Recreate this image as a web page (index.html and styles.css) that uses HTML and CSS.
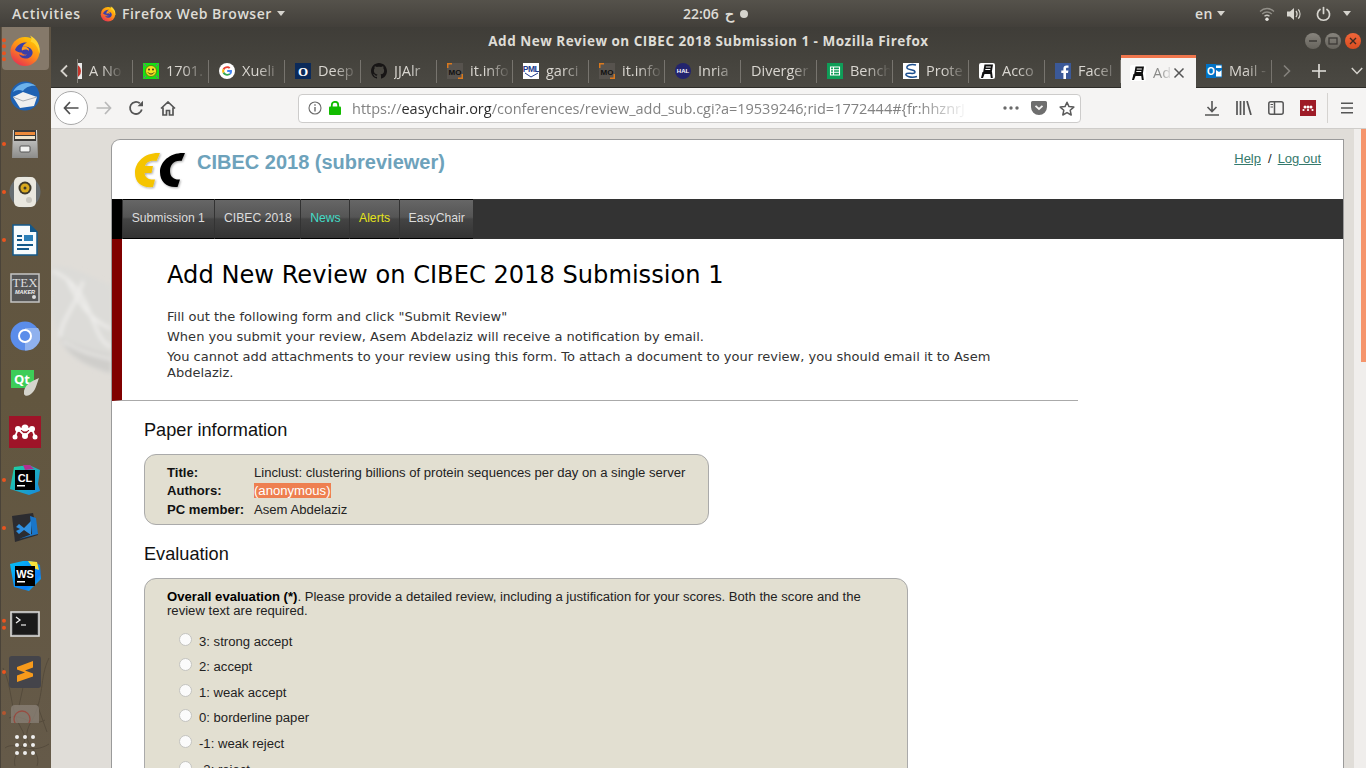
FILE: index.html
```html
<!DOCTYPE html>
<html lang="en">
<head>
<meta charset="utf-8">
<title>Add New Review on CIBEC 2018 Submission 1 - Mozilla Firefox</title>
<link rel="stylesheet" href="styles.css">
</head>
<body>
<svg class="defs" width="0" height="0">
  <defs>
    <linearGradient id="ffg" x1="0.8" y1="0" x2="0.2" y2="1"><stop offset="0" stop-color="#ffd000"/><stop offset="0.5" stop-color="#ff8a1a"/><stop offset="1" stop-color="#e62a55"/></linearGradient>
    <linearGradient id="gray" x1="0" y1="0" x2="0" y2="1"><stop offset="0" stop-color="#d8d8d6"/><stop offset="1" stop-color="#8c8c8a"/></linearGradient>
    <linearGradient id="clg" x1="0" y1="0" x2="1" y2="1"><stop offset="0" stop-color="#1fd6a0"/><stop offset="1" stop-color="#1787e0"/></linearGradient>
    <linearGradient id="wsg" x1="0" y1="0" x2="1" y2="1"><stop offset="0" stop-color="#07c3f2"/><stop offset="0.7" stop-color="#087cfa"/><stop offset="1" stop-color="#20d0d0"/></linearGradient>
    <symbol id="firefox" viewBox="0 0 32 32">
      <circle cx="16" cy="17.5" r="14.5" fill="url(#ffg)"/>
      <path d="M21 1.5C28 5 32 12 30.5 20 29 13 26 9 21.500 7.500 23 5.500 22.500 3.500 21 1.500Z" fill="#ffd22e"/>
      <path d="M6 16C8 10.500 13 8 18 8.500 15.500 9.800 14 11 13.500 13 17 12 22.500 13 23.500 17.500 24.300 21.500 20.500 25 16 24.500 12.500 24.200 10.500 22 10 20 12 22 16 22.300 18 20.500 15.500 21 13 20 12.500 18.500 10.500 18.500 8 18 6 16Z" fill="#3b3fa8"/>
      <path d="M13.500 13C17 12 20.500 14 20 17 18.500 15 15.500 15 13 16.500 12.500 15.500 12.800 14 13.500 13Z" fill="#ff9a1f"/>
    </symbol>
    <symbol id="chair" viewBox="0 0 16 16">
      <rect width="16" height="16" rx="2" fill="#fff"/>
      <path d="M5.500 1.500H14L12.800 9H13L13.800 15H11.800L11.300 11H5.500L4 15H2L3.500 9H4.200Z" fill="#111"/>
      <rect x="6.800" y="3.500" width="5" height="1" fill="#fff"/><rect x="6.300" y="6" width="5" height="1" fill="#fff"/>
    </symbol>
    <symbol id="mo" viewBox="0 0 16 16">
      <rect width="16" height="16" fill="#57534e"/>
      <path d="M0 0H5V1.500H1.500V5H0ZM11 16H16V11H14.500V14.500H11Z" fill="#d9791e"/>
      <text x="8" y="12" class="mo-text">MO</text>
    </symbol>
  </defs>
</svg>

<header class="topbar">
  <div class="topbar-left">
    <span class="activities">Activities</span>
    <svg class="app-icon" width="16" height="17"><use href="#firefox"/></svg>
    <span class="app-name">Firefox Web Browser</span>
    <span class="caret"></span>
  </div>
  <div class="clock"><span>22:06 ح</span><span class="clock-dot"></span></div>
  <div class="topbar-right">
    <span class="lang">en</span><span class="caret"></span>
    <svg class="tray-wifi" width="16" height="16" viewBox="0 0 16 16"><g fill="none" stroke="#c8c6c0" stroke-width="1.300"><path d="M1 5.500C5 1.500 11 1.500 15 5.500" opacity=".55"/><path d="M3.200 8C6 5.300 10 5.300 12.800 8" opacity=".55"/><path d="M5.500 10.300C7 9 9 9 10.500 10.300"/></g><circle cx="8" cy="13.300" r="1.700" fill="#e6e4df"/></svg>
    <svg class="tray-vol" width="17" height="16" viewBox="0 0 17 16"><path d="M1 5.500H4L8 2V14L4 10.500H1Z" fill="#d8d6d0"/><g fill="none" stroke="#d8d6d0" stroke-width="1.300"><path d="M10 5C11.300 6.800 11.300 9.200 10 11"/><path d="M12.300 3.300C14.500 6 14.500 10 12.300 12.700"/></g></svg>
    <svg class="tray-pow" width="15" height="16" viewBox="0 0 15 16"><g fill="none" stroke="#d8d6d0" stroke-width="1.700" stroke-linecap="round"><path d="M7.500 1.500V7.500"/><path d="M4 3.500C1 5.500 .8 9.500 2.600 12 5 15 10 15 12.400 12 14.200 9.500 14 5.500 11 3.500"/></g></svg>
    <span class="caret caret-last"></span>
  </div>
</header>

<div class="desktop">
  <nav class="dock">
    <svg class="dock-texture" width="51" height="120" viewBox="0 0 51 120"><g fill="none" stroke="#3e362b" stroke-width="1" opacity=".4"><path d="M2 20C12 40 8 60 20 80S10 100 14 118"/><path d="M48 10C38 30 44 50 30 74S42 100 36 118"/><path d="M8 70C20 64 30 80 44 72"/><path d="M4 100C14 92 30 108 48 96"/><path d="M24 30L18 58M36 56L46 84"/></g></svg>
    <div class="dock-item dock-first">
      <span class="run-dots"><i></i><i></i><i></i><i></i></span>
      <svg width="32" height="32"><use href="#firefox"/></svg>
    </div>
    <div class="dock-item">
      <svg width="32" height="32" viewBox="0 0 32 32"><circle cx="16" cy="16" r="14.500" fill="#1f62b3"/><path d="M4 12C8 4 18 0 27 6 21 5 16 8 14 11 10 9 7 10 4 12Z" fill="#6cb2ec"/><path d="M4 17L14 12 28 17 25 26 11 28Z" fill="#f0f0f0"/><path d="M4 17L14 21 28 17" fill="none" stroke="#a9aeb4" stroke-width="1"/></svg>
    </div>
    <div class="dock-item">
      <span class="run-dots"><i></i></span>
      <svg width="28" height="32" viewBox="0 0 28 32"><path d="M2 2H26L27 30H1Z" fill="url(#gray)"/><rect x="3" y="2" width="22" height="11" fill="#3c3a38"/><rect x="4" y="4" width="20" height="3" fill="#ee8a3a"/><rect x="4" y="8" width="20" height="3" fill="#f0e4cc"/><rect x="9" y="18" width="10" height="6" rx="1" fill="#f2f2f0" stroke="#555"/></svg>
    </div>
    <div class="dock-item">
      <span class="run-dots"><i></i></span>
      <svg width="32" height="32" viewBox="0 0 32 32"><circle cx="16" cy="16" r="15.500" fill="#6f8cad" opacity=".45"/><rect x="5" y="1" width="22" height="30" rx="5" fill="#e9e7df"/><circle cx="16" cy="12" r="6.500" fill="#3f3a2c"/><circle cx="16" cy="12" r="4.500" fill="#d9a91f"/><circle cx="16" cy="12" r="1.500" fill="#3f3a2c"/><circle cx="20" cy="24" r="3" fill="#c9c7c0"/></svg>
    </div>
    <div class="dock-item">
      <span class="run-dots"><i></i></span>
      <svg width="26" height="32" viewBox="0 0 26 32"><path d="M1 1H18L25 8V31H1Z" fill="#f7fbfd" stroke="#14598a" stroke-width="1.500"/><path d="M18 1L25 8H18Z" fill="#14598a"/><rect x="5" y="11" width="5" height="2" fill="#14598a"/><rect x="5" y="15" width="5" height="2" fill="#14598a"/><rect x="12" y="11" width="9" height="6" fill="#2a7fb8"/><rect x="5" y="20" width="16" height="2" fill="#14598a"/><rect x="5" y="24" width="12" height="2" fill="#14598a"/></svg>
    </div>
    <div class="dock-item">
      <svg width="30" height="30" viewBox="0 0 30 30"><rect x="1" y="1" width="28" height="28" fill="#555" stroke="#c5c5c3" stroke-width="1.500"/><text x="15" y="14" class="tex-t">TEX</text><text x="15" y="20.500" class="tex-m">MAKER</text><circle cx="24" cy="24" r="2" fill="#ddd"/></svg>
    </div>
    <div class="dock-item">
      <svg width="30" height="30" viewBox="0 0 30 30"><circle cx="15" cy="15" r="14.500" fill="#5b8dea"/><path d="M15 7H28A14.500 14.500 0 0 1 15 29.500Z" fill="#8fb1ee"/><circle cx="15" cy="15" r="7" fill="#fff"/><circle cx="15" cy="15" r="5" fill="#5b8dea"/></svg>
    </div>
    <div class="dock-item">
      <svg width="30" height="30" viewBox="0 0 30 30"><rect x="1" y="1" width="23" height="18" fill="#3dcd58" /><text x="12" y="15" class="qt-t">Qt</text><path d="M29 9C22 12 13 16 14 25 15 28 20 27 23 23 26 20 27 14 29 9Z" fill="#d5d4cc"/></svg>
    </div>
    <div class="dock-item">
      <svg width="32" height="32" viewBox="0 0 32 32"><rect width="32" height="32" fill="#9e1428"/><g fill="#fff"><circle cx="16" cy="12" r="3.500"/><circle cx="9" cy="13" r="3"/><circle cx="23" cy="13" r="3"/><circle cx="6" cy="21" r="2.500"/><circle cx="26" cy="21" r="2.500"/><circle cx="16" cy="20" r="3"/></g><path d="M6 21L9 13 16 20 23 13 26 21M9 13H23" stroke="#fff" stroke-width="1.800" fill="none"/></svg>
    </div>
    <div class="dock-item">
      <span class="run-dots"><i></i></span>
      <svg width="32" height="32" viewBox="0 0 32 32"><path d="M5 3L20 1 31 6 29 20 31 27 20 31 1 25 3 14Z" fill="url(#clg)"/><path d="M14 1L21 1 25 5 16 6Z" fill="#b3308f"/><rect x="6" y="6" width="20" height="20" fill="#000"/><text x="16" y="17.500" class="jb-t">CL</text><rect x="8" y="21" width="8" height="1.500" fill="#fff"/></svg>
    </div>
    <div class="dock-item">
      <span class="run-dots"><i></i></span>
      <svg width="28" height="30" viewBox="0 0 28 30"><path d="M1 3L22 0 27 22 4 29Z" fill="#2c2c30"/><path d="M19 3L25 5 27 21 8 26 21 21Z" fill="#1a76c9"/><path d="M5 14L8 11 13 15 20 8V22L13 17 8 21 5 18 9 16Z" fill="#2f8fe0"/></svg>
    </div>
    <div class="dock-item">
      <svg width="32" height="32" viewBox="0 0 32 32"><path d="M1 4L14 1 22 1 31 5 32 19 20 31 5 27Z" fill="url(#wsg)"/><path d="M19 1L28 2 30 10 24 8Z" fill="#f7e33b"/><rect x="6" y="6" width="20" height="20" fill="#000"/><text x="16" y="17.500" class="jb-t">WS</text><rect x="8" y="21" width="8" height="1.500" fill="#fff"/></svg>
    </div>
    <div class="dock-item">
      <span class="run-dots"><i></i><i></i></span>
      <svg width="30" height="26" viewBox="0 0 30 26"><rect x="1" y="1" width="28" height="24" fill="#3e3e3e" stroke="#d9d9d7" stroke-width="1.600"/><rect x="3" y="3" width="24" height="20" fill="#1a1a1a"/><path d="M6 6L10 9 6 12" fill="none" stroke="#eee" stroke-width="1.300"/><path d="M11 14H16" stroke="#eee" stroke-width="1.200"/></svg>
    </div>
    <div class="dock-item">
      <span class="run-dots"><i></i></span>
      <svg width="32" height="32" viewBox="0 0 32 32"><rect width="32" height="32" rx="3" fill="#44444a"/><path d="M8 11L24 5V11.500L16 14.500 24 17.500V20.500L8 26V19.500L16 16.500 8 13.500Z" fill="#f79a1b"/></svg>
    </div>
    <div class="dock-item dock-partial">
      <span class="run-dots"><i></i></span>
      <svg width="28" height="18" viewBox="0 0 28 18"><rect y="0" width="28" height="24" rx="4" fill="#8b8278"/><circle cx="11" cy="14" r="8" fill="none" stroke="#a8483f" stroke-width="1.300"/></svg>
    </div>
    <div class="dock-grid"><i></i><i></i><i></i><i></i><i></i><i></i><i></i><i></i><i></i></div>
  </nav>

  <div class="window">
    <div class="titlebar">
      <span></span>
      <span class="title-text">Add New Review on CIBEC 2018 Submission 1 - Mozilla Firefox</span>
      <div class="win-buttons">
        <span class="win-btn"><svg width="10" height="10" viewBox="0 0 10 10"><path d="M1 5H9" stroke="#3c3a36" stroke-width="1.500"/></svg></span>
        <span class="win-btn"><svg width="10" height="10" viewBox="0 0 10 10"><rect x="1" y="2" width="8" height="6" fill="none" stroke="#3c3a36" stroke-width="1.300"/></svg></span>
        <span class="win-btn win-close"><svg width="10" height="10" viewBox="0 0 10 10"><path d="M2 2L8 8M8 2L2 8" stroke="#3c2a22" stroke-width="1.400"/></svg></span>
      </div>
    </div>

    <div class="tabstrip">
      <span class="tab-scroll"><svg width="10" height="14" viewBox="0 0 10 14"><path d="M8 1.500L2.500 7 8 12.500" fill="none" stroke="#d5d2cc" stroke-width="1.800"/></svg></span>
      <div class="tab tab-first"><svg class="fav-clip" width="16" height="16" viewBox="0 0 16 16"><rect width="16" height="16" fill="#e8e8e8"/><circle cx="8" cy="8" r="7" fill="#c7342a"/></svg><span class="tab-label">A No</span></div>
      <div class="tab"><svg width="16" height="16" viewBox="0 0 16 16"><rect width="16" height="16" fill="#16e016"/><circle cx="8" cy="8" r="5.500" fill="#f3e21f" stroke="#5c5a10" stroke-width=".7"/><circle cx="6" cy="6.500" r=".9" fill="#222"/><circle cx="10" cy="6.500" r=".9" fill="#222"/><path d="M5 9.500C6.500 11.500 9.500 11.500 11 9.500" stroke="#222" fill="none"/><path d="M1 1L3 3M15 1L13 3M1 15L3 13M15 15L13 13" stroke="#777" stroke-width="1.300"/></svg><span class="tab-label">1701.</span></div>
      <div class="tab"><svg width="16" height="16" viewBox="0 0 16 16"><circle cx="8" cy="8" r="8" fill="#fff"/><path d="M8.200 3.300C9.500 3.300 10.600 3.800 11.400 4.500L10 5.800C9.500 5.400 8.900 5.100 8.200 5.100 6.900 5.100 5.800 5.900 5.400 7L3.700 5.700C4.600 4.200 6.300 3.300 8.200 3.300Z" fill="#ea4335"/><path d="M3.700 5.700L5.400 7C5.200 7.600 5.200 8.400 5.400 9L3.700 10.300C3 9 3 7 3.700 5.700Z" fill="#fbbc05"/><path d="M3.700 10.300L5.400 9C5.800 10.100 6.900 10.900 8.200 10.900 9 10.900 9.600 10.700 10.100 10.400L11.700 11.600C10.800 12.300 9.600 12.700 8.200 12.700 6.300 12.700 4.600 11.800 3.700 10.300Z" fill="#34a853"/><path d="M12.900 7H8.200V8.900H10.900C10.700 9.500 10.500 10 10.100 10.400L11.700 11.600C12.700 10.700 13.200 9 12.900 7Z" fill="#4285f4"/></svg><span class="tab-label">Xueli</span></div>
      <div class="tab"><svg width="16" height="16" viewBox="0 0 16 16"><rect width="16" height="16" fill="#0b2a5a"/><text x="8" y="12.500" class="fav-o">O</text></svg><span class="tab-label">Deep</span></div>
      <div class="tab"><svg width="16" height="16" viewBox="0 0 16 16"><path d="M8 0C3.600 0 0 3.600 0 8 0 11.500 2.300 14.500 5.500 15.600 5.900 15.700 6 15.400 6 15.200V13.800C3.800 14.300 3.300 12.700 3.300 12.700 2.900 11.800 2.400 11.500 2.400 11.500 1.700 11 2.500 11 2.500 11 3.300 11.100 3.700 11.800 3.700 11.800 4.400 13.100 5.600 12.700 6 12.500 6.100 12 6.300 11.600 6.500 11.400 4.700 11.200 2.900 10.500 2.900 7.500 2.900 6.600 3.200 5.900 3.700 5.300 3.600 5.100 3.300 4.300 3.800 3.200 3.800 3.200 4.500 3 6 4 7.300 3.600 8.700 3.600 10 4 11.500 3 12.200 3.200 12.200 3.200 12.700 4.300 12.400 5.100 12.300 5.300 12.800 5.900 13.100 6.600 13.100 7.500 13.100 10.600 11.300 11.200 9.500 11.400 9.800 11.700 10 12.100 10 12.900V15.200C10 15.400 10.100 15.700 10.600 15.600 13.700 14.500 16 11.500 16 8 16 3.600 12.400 0 8 0Z" fill="#171515"/></svg><span class="tab-label">JJAlr</span></div>
      <div class="tab"><svg width="16" height="16"><use href="#mo"/></svg><span class="tab-label">it.info</span></div>
      <div class="tab"><svg width="16" height="16" viewBox="0 0 16 16"><rect width="16" height="16" fill="#fff"/><text x="8" y="8.500" class="fav-pml">PML</text><path d="M2 10L8 14 15 10" stroke="#203a8c" fill="none"/></svg><span class="tab-label">garci</span></div>
      <div class="tab"><svg width="16" height="16"><use href="#mo"/></svg><span class="tab-label">it.info</span></div>
      <div class="tab"><svg width="16" height="16" viewBox="0 0 16 16"><circle cx="8" cy="8" r="8" fill="#23246e"/><text x="8" y="10" class="fav-hal">HAL</text></svg><span class="tab-label">Inria</span></div>
      <div class="tab"><span class="tab-label tab-label-wide">Diverger</span></div>
      <div class="tab"><svg width="16" height="16" viewBox="0 0 16 16"><rect width="16" height="16" fill="#0f9d58"/><path d="M3.500 4H12.500V12H3.500ZM3.500 6.700H12.500M3.500 9.300H12.500M6.500 4V12" fill="none" stroke="#fff" stroke-width="1.100"/></svg><span class="tab-label">Bench</span></div>
      <div class="tab"><svg width="16" height="16" viewBox="0 0 16 16"><rect width="16" height="16" fill="#fff"/><path d="M13 2C8 .5 3 2.500 4 5S12 6 12 9 4 9 3 11 8 15.500 14 13.500" fill="none" stroke="#1c4f8f" stroke-width="1.500"/></svg><span class="tab-label">Prote</span></div>
      <div class="tab"><svg width="16" height="16"><use href="#chair"/></svg><span class="tab-label">Acco</span></div>
      <div class="tab"><svg width="16" height="16" viewBox="0 0 16 16"><rect width="16" height="16" fill="#3b5998"/><path d="M11 16V10H13L13.400 7.500H11V6C11 5.200 11.300 4.800 12.200 4.800H13.500V2.500C13 2.400 12.300 2.400 11.500 2.400 9.600 2.400 8.400 3.500 8.400 5.600V7.500H6.300V10H8.400V16Z" fill="#fff"/></svg><span class="tab-label">Facel</span></div>
      <div class="tab tab-active"><svg width="16" height="16"><use href="#chair"/></svg><span class="tab-label tab-label-short">Ad</span><svg class="tab-close" width="12" height="12" viewBox="0 0 12 12"><path d="M1.500 1.500L10.500 10.500M10.500 1.500L1.500 10.500" stroke="#555" stroke-width="1.500"/></svg></div>
      <div class="tab"><svg width="16" height="16" viewBox="0 0 16 16"><rect x="6" y="2" width="10" height="12" fill="#fff" stroke="#0072c6"/><rect y="1" width="10" height="14" fill="#0072c6"/><text x="5" y="11.500" class="fav-ol">O</text><path d="M10 5H16V7L13 9 10 7Z" fill="#0072c6"/></svg><span class="tab-label">Mail -</span></div>
      <div class="tab-tools">
        <svg width="10" height="14" viewBox="0 0 10 14"><path d="M2 1.500L7.500 7 2 12.500" fill="none" stroke="#85827c" stroke-width="1.600"/></svg>
        <svg width="14" height="14" viewBox="0 0 14 14"><path d="M7 0V14M0 7H14" stroke="#e4e2dd" stroke-width="1.600"/></svg>
        <svg width="12" height="8" viewBox="0 0 12 8"><path d="M.8 1L6 6.500 11.200 1" fill="none" stroke="#d5d2cc" stroke-width="1.500"/></svg>
      </div>
    </div>

    <div class="toolbar">
      <span class="back-btn"><svg width="16" height="14" viewBox="0 0 16 14"><path d="M7 1L1.500 7 7 13M1.500 7H15.500" fill="none" stroke="#4f4f4f" stroke-width="1.700"/></svg></span>
      <svg class="tb-forward" width="16" height="14" viewBox="0 0 16 14"><path d="M9 1L14.500 7 9 13M14.500 7H.5" fill="none" stroke="#b9b9b9" stroke-width="1.700"/></svg>
      <svg class="tb-reload" width="16" height="16" viewBox="0 0 16 16"><path d="M13.800 9.500A6 6 0 1 1 11.800 3.300" fill="none" stroke="#555" stroke-width="1.800"/><path d="M9.500 6.200H15V.8Z" fill="#555"/></svg>
      <svg class="tb-home" width="16" height="15" viewBox="0 0 16 15"><path d="M1 7.500L8 1 15 7.500M3 6.500V14H6.500V9.500H9.500V14H13V6.500" fill="none" stroke="#555" stroke-width="1.700"/></svg>
      <div class="urlbar">
        <svg class="url-info" width="14" height="14" viewBox="0 0 14 14"><circle cx="7" cy="7" r="6" fill="none" stroke="#6a6a6a" stroke-width="1.100"/><path d="M7 6V10.500M7 3.300V4.800" stroke="#6a6a6a" stroke-width="1.400"/></svg>
        <svg class="url-lock" width="12" height="14" viewBox="0 0 12 14"><rect y="5.500" width="12" height="8.500" rx="1" fill="#12bc00"/><path d="M2.800 6V4A3.200 3.200 0 0 1 9.200 4V6" fill="none" stroke="#12bc00" stroke-width="1.800"/></svg>
        <span class="url-text">https://<b>easychair.org</b>/conferences/review_add_sub.cgi?a=19539246;rid=1772444#{fr:hhznrJ</span>
        <svg class="url-dots" width="16" height="4" viewBox="0 0 16 4"><circle cx="2" cy="2" r="1.700" fill="#6a6a6a"/><circle cx="8" cy="2" r="1.700" fill="#6a6a6a"/><circle cx="14" cy="2" r="1.700" fill="#6a6a6a"/></svg>
        <svg class="url-pocket" width="16" height="14" viewBox="0 0 16 14"><path d="M1.500 0H14.500A1.500 1.500 0 0 1 16 1.500V6A8 8 0 0 1 0 6V1.500A1.500 1.500 0 0 1 1.500 0Z" fill="#6e6e6e"/><path d="M4.500 4.800L8 8 11.500 4.800" fill="none" stroke="#f5f4f3" stroke-width="1.800"/></svg>
        <svg class="url-star" width="16" height="15" viewBox="0 0 16 15"><path d="M8 1.200L10 5.600 14.800 6.100 11.200 9.300 12.200 14 8 11.600 3.800 14 4.800 9.300 1.200 6.100 6 5.600Z" fill="none" stroke="#5a5a5a" stroke-width="1.500" stroke-linejoin="round"/></svg>
      </div>
      <svg class="tb-download" width="14" height="15" viewBox="0 0 14 15"><path d="M7 0V10M2.500 6L7 10.500 11.500 6M0 14H14" fill="none" stroke="#555" stroke-width="1.600"/></svg>
      <svg class="tb-library" width="16" height="14" viewBox="0 0 16 14"><path d="M1 0V14M4.500 0V14M8 0V14M11 0L15 14" fill="none" stroke="#555" stroke-width="1.700"/></svg>
      <svg class="tb-sidebar" width="16" height="14" viewBox="0 0 16 14"><rect x=".8" y=".8" width="14.400" height="12.400" rx="2" fill="none" stroke="#555" stroke-width="1.500"/><path d="M6.500 1V13" stroke="#555" stroke-width="1.500"/><path d="M2.500 3.500H5M2.500 6H5" stroke="#555"/></svg>
      <svg class="tb-mendeley" width="16" height="16" viewBox="0 0 16 16"><rect width="16" height="16" fill="#9e1b27"/><g fill="#fff"><circle cx="5" cy="7" r="1.500"/><circle cx="11" cy="7" r="1.500"/><circle cx="8" cy="7" r="1.500"/><circle cx="3.500" cy="10" r="1.100"/><circle cx="12.500" cy="10" r="1.100"/><circle cx="8" cy="10" r="1.100"/></g></svg>
      <span class="tb-sep"></span>
      <svg class="tb-menu" width="12" height="12" viewBox="0 0 12 12"><path d="M0 1.200H12M0 6H12M0 10.800H12" stroke="#555" stroke-width="1.500"/></svg>
    </div>

    <div class="viewport">
      <svg class="swirl" width="60" height="270" viewBox="0 0 60 270"><defs><filter id="soft" x="-20%" y="-20%" width="140%" height="140%"><feGaussianBlur stdDeviation="2"/></filter></defs><g filter="url(#soft)"><path d="M0 138C20 134 42 150 60 156V246C40 238 16 230 9 212 4 198 0 182 0 160Z" fill="#dcdbd8"/><path d="M9 208C22 216 42 222 60 226V244C40 238 18 230 9 208Z" fill="#cfcecb"/><g fill="none" stroke="#eeedeb" stroke-width="3"><path d="M2 142C20 150 30 162 38 182S50 214 60 218"/><path d="M32 152C26 176 10 190 9 208"/><path d="M16 150C26 172 38 190 60 200"/></g><path d="M12 212C26 222 44 226 60 230" fill="none" stroke="#f0efed" stroke-width="2"/></g></svg>
      <main class="page">
        <section class="page-head">
          <div class="conf">
            <svg class="logo" width="54" height="38" viewBox="0 0 54 38"><defs><filter id="sh" x="-20%" y="-20%" width="140%" height="140%"><feDropShadow dx="1" dy="1" stdDeviation="1" flood-color="#000" flood-opacity=".35"/></filter></defs><path d="M26 1L22.500 9C15 8 12 11 11 14H19L17.500 21H10.500C11 26 15 28 21 27.500L19 35C8 36 1 31 1 21 1 9 12 0 26 1Z" fill="#f5c400" filter="url(#sh)"/><path d="M51 1L47.500 9C40 8 36 13 36 19 36 25 40 28 46 27.500L43.500 35C33 36 26 30 26 20 26 9 37 0 51 1Z" fill="#000" filter="url(#sh)"/></svg>
            <h1 class="conf-title">CIBEC 2018 (subreviewer)</h1>
            <div class="conf-links"><a href="#">Help</a><span class="slash">/</span><a href="#">Log out</a></div>
          </div>
          <ul class="menu">
            <li>Submission 1</li>
            <li>CIBEC 2018</li>
            <li class="menu-news">News</li>
            <li class="menu-alerts">Alerts</li>
            <li>EasyChair</li>
          </ul>
        </section>
        <section class="intro">
          <h2 class="intro-title">Add New Review on CIBEC 2018 Submission 1</h2>
          <p>Fill out the following form and click "Submit Review"</p>
          <p>When you submit your review, Asem Abdelaziz will receive a notification by email.</p>
          <p>You cannot add attachments to your review using this form. To attach a document to your review, you should email it to Asem Abdelaziz.</p>
        </section>
        <section class="body">
          <h3 class="sec-title">Paper information</h3>
          <div class="box box-info">
            <table class="info">
              <tr><th>Title:</th><td>Linclust: clustering billions of protein sequences per day on a single server</td></tr>
              <tr><th>Authors:</th><td><span class="anon">(anonymous)</span></td></tr>
              <tr><th>PC member:</th><td>Asem Abdelaziz</td></tr>
            </table>
          </div>
          <h3 class="sec-title sec-eval">Evaluation</h3>
          <div class="box box-eval">
            <p class="eval-text"><b>Overall evaluation (*)</b>. Please provide a detailed review, including a justification for your scores. Both the score and the review text are required.</p>
            <label class="opt"><input type="radio" name="s"><span>3: strong accept</span></label>
            <label class="opt"><input type="radio" name="s"><span>2: accept</span></label>
            <label class="opt"><input type="radio" name="s"><span>1: weak accept</span></label>
            <label class="opt"><input type="radio" name="s"><span>0: borderline paper</span></label>
            <label class="opt"><input type="radio" name="s"><span>-1: weak reject</span></label>
            <label class="opt"><input type="radio" name="s"><span>-2: reject</span></label>
          </div>
        </section>
      </main>
      <div class="scrollbar"><span class="thumb"></span></div>
    </div>
  </div>
</div>
</body>
</html>
```
FILE: styles.css
```css
* { box-sizing: border-box; }
html, body { margin: 0; height: 100%; overflow: hidden; }
body { width: 1366px; height: 768px; display: flex; flex-direction: column; font-family: "Liberation Sans", Arial, sans-serif; background: #3e3c37; }
.defs { position: absolute; }
.mo-text { font: bold 8px "Liberation Sans", sans-serif; fill: #111; text-anchor: middle; }
.fav-o { font: bold 13px "Liberation Serif", serif; fill: #fff; text-anchor: middle; }
.fav-pml { font: bold 8.500px "Liberation Sans", sans-serif; fill: #203a8c; text-anchor: middle; letter-spacing: -.5px; }
.fav-hal { font: bold 6px "Liberation Sans", sans-serif; fill: #fff; text-anchor: middle; }
.fav-ol { font: bold 10px "Liberation Sans", sans-serif; fill: #fff; text-anchor: middle; }
.tex-t { font: 13px "Liberation Serif", serif; fill: #ddd; text-anchor: middle; }
.tex-m { font: italic bold 5.500px "Liberation Sans", sans-serif; fill: #eee; text-anchor: middle; }
.qt-t { font: bold 13px "Open Sans", sans-serif; fill: #fff; text-anchor: middle; }
.jb-t { font: bold 11px "Liberation Sans", sans-serif; fill: #fff; text-anchor: middle; }

/* top bar */
.topbar { height: 27px; flex: none; display: flex; align-items: center; background: linear-gradient(#55524b, #423f3a); color: #dedcd6; font-family: "Open Sans", sans-serif; font-size: 14px; font-weight: 600; letter-spacing: .5px; }
.topbar-left { width: 683px; flex: none; display: flex; align-items: center; padding-left: 12px; }
.activities { width: 88px; letter-spacing: .75px; }
.app-icon { margin-right: 6px; }
.app-name { margin-right: 5px; }
.caret { display: inline-block; width: 0; height: 0; border-left: 4.500px solid transparent; border-right: 4.500px solid transparent; border-top: 5px solid #d5d3cd; }
.clock { display: flex; align-items: center; gap: 6px; font-size: 14px; word-spacing: 2px; }
.clock-dot { width: 8px; height: 8px; border-radius: 50%; background: #d5d3cd; }
.topbar-right { margin-left: auto; display: flex; align-items: center; }
.lang { margin-right: 4px; }
.tray-wifi { margin-left: 34px; }
.tray-vol { margin-left: 11px; }
.tray-pow { margin-left: 13px; }
.caret-last { margin-left: 12px; margin-right: 15px; }

/* desktop */
.desktop { flex: 1; display: flex; min-height: 0; }
.dock { width: 51px; flex: none; position: relative; display: flex; flex-direction: column; align-items: stretch; background: linear-gradient(#5f5444, #62563f 50%, #655a49); border-left: 1px solid #4a4339; overflow: hidden; }
.dock-texture { position: absolute; left: 0; bottom: 0; }
.dock-item { height: 48px; flex: none; position: relative; display: flex; align-items: center; justify-content: center; margin-left: -1px; padding-right: 1px; }
.dock-first { height: 45px; }
.dock-first::before { content: ""; position: absolute; left: 2px; top: 0; right: 2px; bottom: 2px; border-radius: 0 0 4px 4px; background: #85796a; }
.dock-first svg { position: relative; }
.run-dots { position: absolute; left: 2px; top: 50%; transform: translateY(-50%); display: flex; flex-direction: column; gap: 2.500px; z-index: 1; }
.run-dots i { width: 4px; height: 4px; border-radius: 50%; background: #e9541f; }
.dock-partial { height: 26px; align-items: flex-start; padding-top: 9px; }
.dock-partial .run-dots { top: 15px; transform: none; opacity: .6; }
.dock-partial svg { opacity: .75; }
.dock-grid { position: absolute; left: 14px; bottom: 13px; display: grid; grid-template-columns: repeat(3, 4px); gap: 4px; }
.dock-grid i { width: 4px; height: 4px; border-radius: 50%; background: #efefef; }

/* window */
.window { flex: 1; min-width: 0; display: flex; flex-direction: column; }
.titlebar { height: 28px; flex: none; display: grid; grid-template-columns: 1fr auto 1fr; align-items: center; background: linear-gradient(#3f3d38, #44423c); color: #dedcd6; font-family: "Open Sans", sans-serif; font-size: 13.500px; font-weight: 700; letter-spacing: .5px; }
.win-buttons { display: flex; justify-content: flex-end; gap: 4px; padding-right: 5px; }
.win-btn { width: 16px; height: 16px; border-radius: 50%; display: flex; align-items: center; justify-content: center; background: linear-gradient(#87847d, #66635c); }
.win-close { background: linear-gradient(#f0663a, #d94d20); }

/* tabs */
.tabstrip { height: 33px; flex: none; display: flex; align-items: stretch; background: linear-gradient(#44423c, #4b4943); border-bottom: 1px solid #2e2d29; color: #d9d6d0; font-family: "Open Sans", sans-serif; font-size: 14.500px; }
.tab-scroll { width: 27px; flex: none; display: flex; align-items: center; justify-content: center; border-right: 1px solid #85827c; margin: 4px 0; }
.tab { width: 76px; flex: none; display: flex; align-items: center; gap: 7px; padding-left: 10px; position: relative; }
.tab::after { content: ""; position: absolute; right: 0; top: 5px; bottom: 4px; width: 1px; background: #77746e; }
.tab-first { width: 55px; padding-left: 0; overflow: hidden; }
.tab-first .fav-clip { margin-left: -12px; }
.tab-label { display: block; width: 41px; margin-top: -2px; overflow: hidden; white-space: nowrap; -webkit-mask-image: linear-gradient(90deg, #000 40%, transparent 100%); mask-image: linear-gradient(90deg, #000 40%, transparent 100%); }
.tab-first .tab-label { width: 34px; }
.tab-label-wide { width: 60px; -webkit-mask-image: linear-gradient(90deg, #000 70%, transparent 100%); mask-image: linear-gradient(90deg, #000 70%, transparent 100%); }
.tab-active { width: 75px; background: #f5f4f3; border-top: 3px solid #f0764d; color: #8a8a88; margin-bottom: -1px; padding-left: 9px; }
.tab-active::after { display: none; }
.tab-label-short { width: 20px; -webkit-mask-image: linear-gradient(90deg, #000 35%, transparent 100%); mask-image: linear-gradient(90deg, #000 35%, transparent 100%); }
.tab-close { margin-left: -7px; flex: none; }
.tab-tools { flex: 1; display: flex; align-items: center; }
.tab-tools svg:nth-child(1) { margin-left: 10px; }
.tab-tools svg:nth-child(2) { margin-left: 20px; }
.tab-tools svg:nth-child(3) { margin-left: 25px; }

/* toolbar */
.toolbar { height: 41px; flex: none; display: flex; align-items: center; background: #f5f4f3; border-bottom: 1px solid #cfcdca; position: relative; }
.back-btn { width: 34px; height: 34px; margin-left: 3px; flex: none; border-radius: 50%; background: #fff; border: 1px solid #a9a9a9; display: flex; align-items: center; justify-content: center; }
.tb-forward { margin-left: 8px; }
.tb-reload { margin-left: 16px; }
.tb-home { margin-left: 16px; }
.urlbar { width: 783px; height: 29px; margin-left: 122px; flex: none; display: flex; align-items: center; background: #fff; border: 1px solid #cdcccb; border-radius: 4px; }
.url-info { margin-left: 9px; }
.url-lock { margin-left: 7px; }
.url-text { margin-left: 11px; width: 616px; white-space: nowrap; overflow: hidden; font-family: "Open Sans", sans-serif; font-size: 14.500px; color: #828282; -webkit-mask-image: linear-gradient(90deg, #000 92%, transparent 100%); mask-image: linear-gradient(90deg, #000 92%, transparent 100%); }
.url-text b { font-weight: 400; color: #2e2e2e; }
.url-dots { margin-left: 35px; }
.url-pocket { margin-left: 12px; }
.url-star { margin-left: 12px; }
.tb-download { margin-left: 124px; }
.tb-library { margin-left: 17px; }
.tb-sidebar { margin-left: 16px; }
.tb-mendeley { margin-left: 16px; }
.tb-sep { width: 1px; height: 30px; background: #d5d3d0; margin-left: 11px; }
.tb-menu { margin-left: 13px; }

/* viewport */
.viewport { flex: 1; min-height: 0; display: flex; justify-content: flex-end; background: #e0ddd8; position: relative; overflow: hidden; }
.swirl { position: absolute; left: 0; top: 0; }
.page { width: 1233px; height: 800px; margin: 10px 10px 0 0; flex: none; background: #fff; border: 1px solid #9a9a9a; border-bottom: 0; border-top-left-radius: 9px; position: relative; }
.scrollbar { width: 12px; flex: none; display: flex; justify-content: flex-end; background: #f0eeec; }
.thumb { width: 5px; height: 233px; background: #f5946b; }
.conf { height: 59px; display: flex; align-items: flex-start; padding-left: 22px; }
.logo { margin-top: 12px; flex: none; }
.conf-title { margin: 9px 0 0 9px; font-size: 20px; font-weight: 700; color: #6da2bb; line-height: 26px; }
.conf-links { margin-left: auto; margin-right: 22px; margin-top: 11px; font-size: 13px; line-height: 16px; }
.conf-links a { color: #35796c; text-decoration: underline; }
.slash { margin: 0 6px 0 7px; color: #222; }
.menu { list-style: none; margin: 0; padding: 0 0 0 10px; height: 40px; background: linear-gradient(90deg, #000 10px, #333 10px); display: flex; gap: 1px; }
.menu li { height: 40px; padding: 0 8.700px 2px; display: flex; align-items: center; font-size: 12.200px; color: #ddd; background: linear-gradient(#666 0, #555 45%, #444 50%, #333 100%); border-top: 1px solid #000; border-bottom: 1px solid #000; }
.menu li:first-child { margin-left: 1px; padding-right: 9.500px; }
.menu-news { color: #43dcc6 !important; }
.menu-alerts { color: #e4e41a !important; }
.intro { width: 966px; height: 162px; border-left: 10px solid #800000; border-bottom: 1px solid #aaa; padding: 21px 85px 0 45px; font-family: "DejaVu Sans", sans-serif; font-size: 13.020px; color: #333; }
.intro-title { margin: 0 0 18px; font-size: 24.130px; line-height: 31px; font-weight: 400; color: #000; }
.intro p { margin: 0 0 4px; line-height: 16px; }
.body { padding: 18px 0 0 32px; }
.sec-title { margin: 0; font-size: 18.160px; line-height: 22px; font-weight: 400; color: #111; }
.box { margin-top: 13px; background: #e2dfd1; border: 1px solid #aaa; border-radius: 12px; font-size: 13.120px; color: #222; }
.box-info { width: 565px; height: 71px; padding: 8.800px 0 0 22px; }
.info { border-collapse: collapse; }
.info th { text-align: left; padding: 0; width: 87px; font-weight: 700; color: #111; line-height: 18.500px; }
.info td { padding: 0; line-height: 18.500px; }
.anon { background: #ee7f50; color: #fff; }
.sec-eval { margin-top: 18px; }
.box-eval { width: 764px; height: 300px; padding: 11px 22px 0; }
.eval-text { margin: 0 0 14.700px; line-height: 14px; color: #222; }
.eval-text b { color: #000; }
.opt { display: flex; align-items: flex-start; height: 25.600px; padding-left: 12px; line-height: 15px; }
.opt input { appearance: none; -webkit-appearance: none; width: 13px; height: 13px; margin: 0 7px 0 0; flex: none; border-radius: 50%; background: #fbfbfb; border: 1px solid #c4c4c0; }
.opt span { padding-top: 1px; }
```
